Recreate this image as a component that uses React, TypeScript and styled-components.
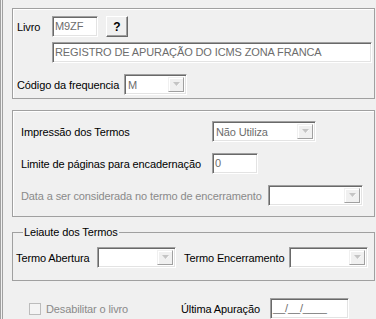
import React from 'react'
import styled, { createGlobalStyle, css } from 'styled-components'

const GlobalStyle = createGlobalStyle`
  html, body {
    margin: 0;
    padding: 0;
    background: #f0f0f0;
  }
  body {
    font-family: 'Liberation Sans', Arial, sans-serif;
    font-size: 11px;
    letter-spacing: -0.12px;
    color: #000;
  }
`

const sunken = css`
  box-sizing: border-box;
  border: 1px solid;
  border-color: #a0a0a0 #fff #fff #a0a0a0;
  box-shadow: inset 1px 1px 0 #696969, inset -1px -1px 0 #e3e3e3;
  background: #fff;
`

const Window = styled.div`
  display: flex;
  flex-direction: column;
  width: 376px;
  height: 319px;
  box-sizing: border-box;
  overflow: hidden;
  border-left: 3px double #a0a0a0;
  padding: 8px 1px 0 9px;
`

const Panel = styled.div<{ $padLeft: number; $height: number }>`
  box-sizing: border-box;
  height: ${({ $height }) => $height}px;
  border: 1px solid #a0a0a0;
  box-shadow: inset 1px 1px 0 #fff;
  padding: 7px 1px 0 ${({ $padLeft }) => $padLeft}px;
  display: flex;
  flex-direction: column;
  & + & {
    margin-top: 11px;
  }
`

const Row = styled.div<{ $top?: number }>`
  display: flex;
  align-items: center;
  margin-top: ${({ $top }) => $top || 0}px;
  height: 21px;
`

const Label = styled.span<{ $width?: number; $muted?: boolean; $gap?: number }>`
  flex: none;
  white-space: nowrap;
  width: ${({ $width }) => ($width ? `${$width}px` : 'auto')};
  margin-left: ${({ $gap }) => $gap || 0}px;
  color: ${({ $muted }) => ($muted ? '#8a8a8a' : '#000')};
`

const Edit = styled.div<{ $width: number; $indent?: number }>`
  ${sunken}
  flex: none;
  width: ${({ $width }) => $width}px;
  height: 21px;
  margin-left: ${({ $indent }) => $indent || 0}px;
  padding: 0 2px;
  line-height: 19px;
  color: #6d6d6d;
  white-space: nowrap;
  overflow: hidden;
`

const ComboBox = styled.div<{ $width: number }>`
  ${sunken}
  flex: none;
  display: flex;
  width: ${({ $width }) => $width}px;
  height: 21px;
  padding: 2px;
`

const ComboText = styled.span`
  flex: 1;
  padding-left: 1px;
  line-height: 17px;
  color: #6d6d6d;
  white-space: nowrap;
  overflow: hidden;
`

const DropButton = styled.span`
  box-sizing: border-box;
  flex: none;
  width: 16px;
  display: flex;
  align-items: center;
  justify-content: center;
  background: #f0f0f0;
  border: 1px solid;
  border-color: #f0f0f0 #a0a0a0 #a0a0a0 #f0f0f0;
  box-shadow: inset 1px 1px 0 #fff;
`

const HelpButton = styled.button`
  box-sizing: border-box;
  flex: none;
  width: 22px;
  height: 21px;
  margin-left: 8px;
  padding: 0;
  background: #f0f0f0;
  border: 1px solid;
  border-color: #fff #696969 #696969 #fff;
  box-shadow: inset -1px -1px 0 #a0a0a0;
  font-family: inherit;
  font-size: 12px;
  font-weight: bold;
  color: #000;
`

const GroupBox = styled.fieldset`
  box-sizing: border-box;
  margin: 9px 0 0;
  padding: 0 0 12px 3px;
  border: 1px solid #a0a0a0;
  min-width: 0;
`

const Legend = styled.legend`
  margin-left: 7px;
  padding: 0 1px;
  line-height: 13px;
`

const Footer = styled.div`
  display: flex;
  align-items: center;
  height: 21px;
  margin-top: 17px;
  padding-left: 17px;
`

const CheckBox = styled.span`
  box-sizing: border-box;
  flex: none;
  width: 12px;
  height: 12px;
  border: 1px solid #bcbcbc;
  background: #f4f4f4;
  margin-right: 5px;
`

const Arrow = () => (
  <svg width='7' height='5' viewBox='0 0 7 5'>
    <path d='M1 1h6l-3 3z' fill='#fff' />
    <path d='M0 0h7l-3.5 4z' fill='#c4c4c4' />
  </svg>
)

const Combo = ({ width, text }: { width: number; text?: string }) => (
  <ComboBox $width={width}>
    <ComboText>{text}</ComboText>
    <DropButton>
      <Arrow />
    </DropButton>
  </ComboBox>
)

export default function App() {
  return (
    <>
      <GlobalStyle />
      <Window>
        <Panel $padLeft={4} $height={91}>
          <Row>
            <Label $width={35}>Livro</Label>
            <Edit $width={46}>M9ZF</Edit>
            <HelpButton type='button'>?</HelpButton>
          </Row>
          <Row $top={5}>
            <Edit $width={320} $indent={35}>REGISTRO DE APURAÇÃO DO ICMS ZONA FRANCA</Edit>
          </Row>
          <Row $top={11}>
            <Label $width={107}>Código da frequencia</Label>
            <Combo width={63} text='M' />
          </Row>
        </Panel>

        <Panel $padLeft={8} $height={107}>
          <Row $top={3}>
            <Label $width={191}>Impressão dos Termos</Label>
            <Combo width={104} text='Não Utiliza' />
          </Row>
          <Row $top={11}>
            <Label $width={191}>Limite de páginas para encadernação</Label>
            <Edit $width={46}>0</Edit>
          </Row>
          <Row $top={11}>
            <Label $width={247} $muted>Data a ser considerada no termo de encerramento</Label>
            <Combo width={95} />
          </Row>
        </Panel>

        <GroupBox>
          <Legend>Leiaute dos Termos</Legend>
          <Row $top={8}>
            <Label $width={81}>Termo Abertura</Label>
            <Combo width={79} />
            <Label $width={105} $gap={8}>Termo Encerramento</Label>
            <Combo width={79} />
          </Row>
        </GroupBox>

        <Footer>
          <CheckBox />
          <Label $width={135} $muted>Desabilitar o livro</Label>
          <Label $width={89}>Última Apuração</Label>
          <Edit $width={79}>__/__/____</Edit>
        </Footer>
      </Window>
    </>
  )
}
